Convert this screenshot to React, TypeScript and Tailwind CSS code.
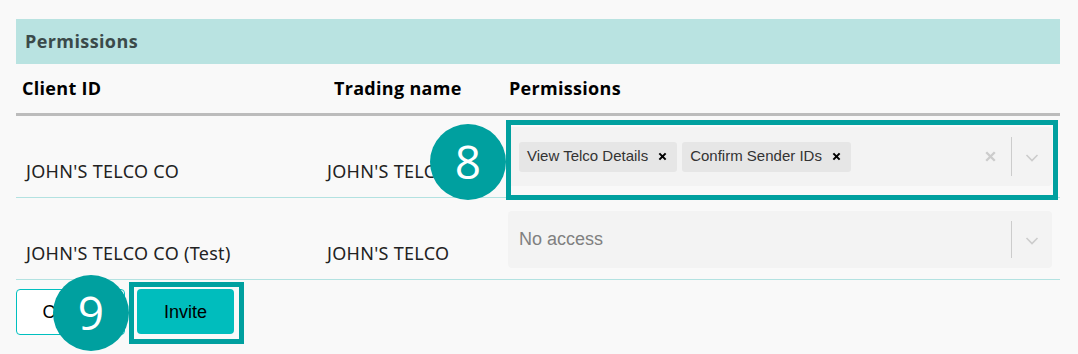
import React from "react";

const cellFont = { fontFamily: '"Noto Sans", "Open Sans", sans-serif' };
const headFont = { fontFamily: '"Open Sans", "Noto Sans", sans-serif' };
const uiFont = { fontFamily: '"Liberation Sans", Arial, sans-serif' };

const Chevron = () => (
  <svg width="20" height="20" viewBox="0 0 20 20" className="text-[#cccccc]">
    <path
      d="M4.5 8l5.5 5.5L15.5 8"
      fill="none"
      stroke="currentColor"
      strokeWidth="1.6"
    />
  </svg>
);

const Cross = ({ size = 14, width = 2.4, className = "" }) => (
  <svg width={size} height={size} viewBox="0 0 14 14" className={className}>
    <path
      d="M3 3l8 8M11 3l-8 8"
      fill="none"
      stroke="currentColor"
      strokeWidth={width}
    />
  </svg>
);

const Chip: React.FC<{ label: string }> = ({ label }) => (
  <div className="flex h-[30px] items-center rounded-[3px] bg-[#e6e6e6]">
    <span className="pl-[8px] text-[15px] text-[#333333]">{label}</span>
    <span className="flex w-[29px] items-center justify-center text-black">
      <Cross size={11} width={2.6} />
    </span>
  </div>
);

const Select: React.FC<{ chips?: string[]; placeholder?: string; h: string }> = ({
  chips,
  placeholder,
  h,
}) => (
  <div
    className={"flex w-full items-center rounded-[4px] bg-[#f3f3f3] " + h}
    style={uiFont}
  >
    <div className="flex flex-1 items-center gap-[5px] pl-[11px]">
      {chips ? (
        chips.map((c) => <Chip key={c} label={c} />)
      ) : (
        <span className="text-[18px] text-[#808080]">{placeholder}</span>
      )}
    </div>
    <div className="flex items-center self-stretch py-[10px]">
      {chips && (
        <span className="flex w-[36px] items-center justify-center text-[#cccccc]">
          <Cross size={15} width={2.2} />
        </span>
      )}
      <span className="ml-[3px] w-px self-stretch bg-[#cccccc]" />
      <span className="flex w-[40px] items-center justify-center">
        <Chevron />
      </span>
    </div>
  </div>
);

const rows = [
  {
    id: "JOHN'S TELCO CO",
    name: "JOHN'S TELCO",
    chips: ["View Telco Details", "Confirm Sender IDs"],
  },
  { id: "JOHN'S TELCO CO (Test)", name: "JOHN'S TELCO" },
];

const Marker: React.FC<{ n: string; className: string }> = ({ n, className }) => (
  <div
    className={
      "absolute flex h-[76px] w-[76px] items-center justify-center rounded-full " +
      "bg-[#00a09f] text-[46px] leading-none text-white " +
      className
    }
    style={headFont}
  >
    <span className="-mt-[2px]">{n}</span>
  </div>
);

export default function App() {
  return (
    <div className="relative h-[354px] w-full overflow-hidden bg-[#f9f9f9] px-[16px] pt-[19px]">
      <div className="w-[1044px]">
        <div
          className="flex h-[45px] items-center bg-[#b9e3e1] pl-[9px] text-[18px] font-bold tracking-[0.4px] text-[#3b4a4a]"
          style={headFont}
        >
          Permissions
        </div>
        <div
          className="flex h-[49px] items-center text-[18px] font-bold tracking-[0.3px] text-black"
          style={headFont}
        >
          <div className="w-[302px] pl-[6px]">Client ID</div>
          <div className="w-[182px] pl-[16px]">Trading name</div>
          <div className="flex-1 pl-[9px]">Permissions</div>
        </div>
        <div className="h-[3px] bg-[#bcbcbc]" />
        {rows.map((r) => (
          <div
            key={r.id}
            className="flex h-[82px] items-end border-b border-[#b3e2e1] pb-[11px]"
          >
            <div
              className="mb-[3px] w-[302px] pl-[10px] text-[18px] leading-6 tracking-[0.3px] text-[#222222]"
              style={cellFont}
            >
              {r.id}
            </div>
            <div
              className="mb-[3px] w-[182px] pl-[9px] text-[18px] leading-6 tracking-[0.3px] text-[#222222]"
              style={cellFont}
            >
              {r.name}
            </div>
            <div className="flex-1 px-[8px]">
              {r.chips ? (
                <Select chips={r.chips} h="h-[59px]" />
              ) : (
                <Select placeholder="No access" h="h-[57px]" />
              )}
            </div>
          </div>
        ))}
        <div className="mt-[9px] flex gap-[12px]" style={uiFont}>
          <button className="h-[46px] w-[109px] rounded-[4px] border border-[#00bfbf] bg-white text-[18px] text-black">
            Cancel
          </button>
          <button className="h-[45px] w-[97px] rounded-[4px] bg-[#00bdbd] pt-[2px] text-[18px] text-black">
            Invite
          </button>
        </div>
      </div>

      <div className="absolute left-[506px] top-[120px] h-[80px] w-[552px] border-[5px] border-[#00a09f]" />
      <div className="absolute left-[129px] top-[282px] h-[62px] w-[115px] border-[5px] border-[#00a09f]" />
      <Marker n="8" className="left-[430px] top-[124px]" />
      <Marker n="9" className="left-[53px] top-[275px]" />
    </div>
  );
}
